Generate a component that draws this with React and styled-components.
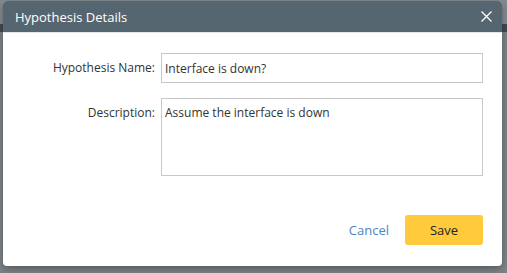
import React, { useState } from 'react';
import styled, { createGlobalStyle } from 'styled-components';

const GlobalStyle = createGlobalStyle`
  html, body {
    margin: 0;
    padding: 0;
    width: 507px;
    height: 273px;
    overflow: hidden;
    font-family: "Open Sans", "Liberation Sans", sans-serif;
  }
`;

const Backdrop = styled.div`
  width: 507px;
  height: 273px;
  background: linear-gradient(
    to bottom,
    #858c91 0px,
    #858c91 24px,
    #3f4b53 24px,
    #3f4b53 32px,
    #7e858a 32px
  );
  padding: 1px 5px 0 3px;
  box-sizing: border-box;
`;

const Modal = styled.div`
  width: 499px;
  height: 265px;
  background: #ffffff;
  border-radius: 4px;
  overflow: hidden;
  box-shadow: 0 3px 8px rgba(0, 0, 0, 0.35);
  display: flex;
  flex-direction: column;
`;

const Header = styled.div`
  height: 31px;
  background: #566670;
  border-bottom: 1px solid #e4e7e9;
  display: flex;
  align-items: center;
  justify-content: space-between;
  padding: 0 9px 0 12px;
  color: #ffffff;
`;

const Title = styled.div`
  font-size: 13px;
`;

const CloseButton = styled.button`
  background: none;
  border: none;
  padding: 0;
  width: 14px;
  height: 14px;
  display: flex;
  align-items: center;
  justify-content: center;
  cursor: pointer;
`;

const Form = styled.div`
  display: grid;
  grid-template-columns: 152px 1fr;
  column-gap: 6px;
  row-gap: 15px;
  padding: 20px 19px 0 0;
`;

const Label = styled.label`
  text-align: right;
  font-size: 12px;
  color: #333333;
  line-height: 17px;
  padding-top: 6px;
`;

const fieldStyle = `
  box-sizing: border-box;
  width: 100%;
  border: 1px solid #c8c8c8;
  font-family: "Open Sans", "Liberation Sans", sans-serif;
  font-size: 12px;
  color: #333333;
  line-height: 17px;
  padding: 5px 3px;
  outline: none;
  background: #ffffff;
`;

const TextInput = styled.input`
  ${fieldStyle}
  height: 30px;
`;

const TextArea = styled.textarea`
  ${fieldStyle}
  height: 78px;
  resize: none;
  display: block;
`;

const Footer = styled.div`
  display: flex;
  justify-content: flex-end;
  align-items: center;
  gap: 16px;
  padding: 39px 19px 0 0;
`;

const LinkButton = styled.button`
  background: none;
  border: none;
  padding: 0;
  font-family: inherit;
  font-size: 13px;
  color: #4a86c5;
  cursor: pointer;
`;

const PrimaryButton = styled.button`
  width: 78px;
  height: 30px;
  border: none;
  border-radius: 3px;
  background: #ffcb3d;
  font-family: inherit;
  font-size: 13px;
  color: #222222;
  cursor: pointer;
`;

export default function App() {
  const [name, setName] = useState('Interface is down?');
  const [description, setDescription] = useState('Assume the interface is down');

  return (
    <>
      <GlobalStyle />
      <Backdrop>
        <Modal>
          <Header>
            <Title>Hypothesis Details</Title>
            <CloseButton type="button" aria-label="Close">
              <svg width="11" height="11" viewBox="0 0 11 11">
                <path d="M0.5 0.5 L10.5 10.5 M10.5 0.5 L0.5 10.5" stroke="#ffffff" strokeWidth="1.3" />
              </svg>
            </CloseButton>
          </Header>
          <Form>
            <Label>Hypothesis Name:</Label>
            <TextInput value={name} onChange={(e) => setName(e.target.value)} />
            <Label>Description:</Label>
            <TextArea value={description} onChange={(e) => setDescription(e.target.value)} />
          </Form>
          <Footer>
            <LinkButton type="button">Cancel</LinkButton>
            <PrimaryButton type="button">Save</PrimaryButton>
          </Footer>
        </Modal>
      </Backdrop>
    </>
  );
}
